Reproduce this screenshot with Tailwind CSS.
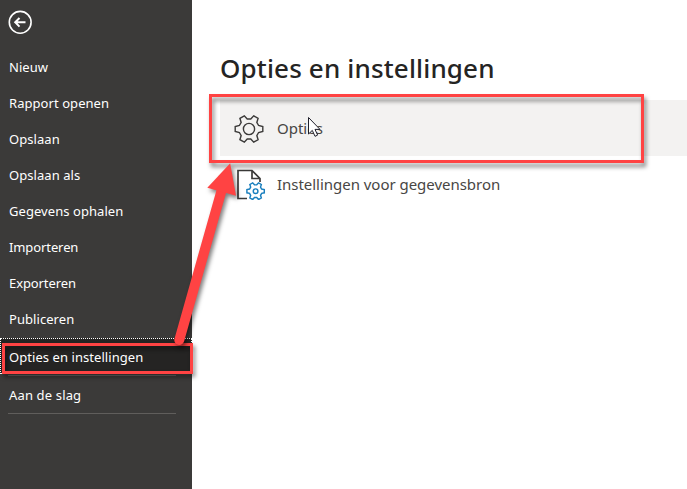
<!DOCTYPE html>
<html lang="nl">
<head>
<meta charset="utf-8">
<title>Opties en instellingen</title>
<script src="https://cdn.jsdelivr.net/npm/@tailwindcss/browser@4"></script>
</head>
<body class="relative flex h-[489px] w-[687px] overflow-hidden bg-white font-['Noto_Sans','Open_Sans',sans-serif]">
<svg class="absolute h-0 w-0"><defs>
<path id="gear" d="M13.8,-2.55 V2.55 L9.6,3.5 L7.83,6.56 L9.11,10.68 L4.69,13.23 L1.77,10.06 H-1.77 L-4.69,13.23 L-9.11,10.68 L-7.83,6.56 L-9.6,3.5 L-13.8,2.55 V-2.55 L-9.6,-3.5 L-7.83,-6.56 L-9.11,-10.68 L-4.69,-13.23 L-1.77,-10.06 H1.77 L4.69,-13.23 L9.11,-10.68 L7.83,-6.56 L9.6,-3.5Z"/>
</defs></svg>
<aside class="flex w-[192px] shrink-0 flex-col bg-[#3b3a39] text-[13px] text-white">
  <div class="h-[49px] pt-[10px] pl-2">
    <svg class="size-6" viewBox="0 0 24 24" fill="none" stroke="#fff"><circle cx="12.2" cy="12.3" r="10.9" stroke-width="1.6"/><path d="M17.5 12.3H7.2M11.5 8L7.2 12.3L11.5 16.6" stroke-width="2"/></svg>
  </div>
  <nav class="flex flex-col tracking-[0.06px]">
    <a class="flex h-9 items-center pt-0.5 pl-[9px]">Nieuw</a>
    <a class="flex h-9 items-center pt-0.5 pl-[9px]">Rapport openen</a>
    <a class="flex h-9 items-center pt-0.5 pl-[9px]">Opslaan</a>
    <a class="flex h-9 items-center pt-0.5 pl-[9px]">Opslaan als</a>
    <a class="flex h-9 items-center pt-0.5 pl-[9px]">Gegevens ophalen</a>
    <a class="flex h-9 items-center pt-0.5 pl-[9px] tracking-[-0.1px]">Importeren</a>
    <a class="flex h-9 items-center pt-0.5 pl-[9px] tracking-[-0.1px]">Exporteren</a>
    <a class="flex h-9 items-center pt-0.5 pl-[9px]">Publiceren</a>
    <div class="mt-px mb-px flex h-9 items-center border border-dotted border-white bg-[#252423] pt-[3px] pl-2">Opties en instellingen</div>
    <div class="ml-2 h-px w-[168px] bg-[#605e5c]"></div>
    <a class="flex h-[37px] items-center pt-0.5 pl-[9px] tracking-[0.15px]">Aan de slag</a>
    <div class="ml-2 h-px w-[168px] bg-[#605e5c]"></div>
  </nav>
</aside>
<main class="flex min-w-0 flex-1 flex-col">
  <h1 class="mt-[49px] ml-[28px] h-[51px] text-[26px] leading-[38px] font-medium tracking-[0.15px] whitespace-nowrap text-[#252423]">Opties en instellingen</h1>
  <div class="ml-7 flex h-14 items-center bg-[#f3f2f1] pl-[14px] text-[15px] text-[#484644]">
    <svg class="mt-0.5 mr-[13px] h-[30px] w-[30px]" viewBox="-15 -15 30 30" fill="none" stroke="#3b3a39" stroke-width="1.4"><use href="#gear"/><circle r="5.6"/></svg>
    <span>Opties</span>
  </div>
  <div class="ml-7 flex h-14 items-center pl-[14px] text-[15px] text-[#484644]">
    <svg class="mr-[11px] h-8 w-8" viewBox="234 168 32 32" fill="none"><path d="M247 198.5H238V170.5H252L260 178.5V182M252 170.5V178.5H260" stroke="#3b3a39" stroke-width="1.7"/><g transform="translate(255.6 191.2) scale(.63)" stroke="#1a7fbe" stroke-width="2.3"><use href="#gear" fill="#fff"/><circle r="3.7"/></g></svg>
    <span class="tracking-[-0.03px]">Instellingen voor gegevensbron</span>
  </div>
</main>
<svg class="absolute top-0 left-0" width="687" height="489" viewBox="0 0 687 489" fill="none">
  <path d="M308.5 117.5V134L312.3 130.4L315 136.3L317.6 135.1L315 129.4H320Z" fill="#fff" stroke="#1f1f2b"/>
  <g class="drop-shadow-[2px_4px_2px_rgba(0,0,0,0.5)]"><rect x="210.5" y="95.5" width="432" height="66" stroke="#ff4343" stroke-width="3"/></g>
  <g class="drop-shadow-[2px_3px_2px_rgba(0,0,0,0.5)]"><rect x="3.5" y="344.5" width="188" height="28" stroke="#ff4343" stroke-width="3"/></g>
  <g class="drop-shadow-[2px_3px_2px_rgba(0,0,0,0.5)]"><path d="M179.3 340L222 189" stroke="#ff4343" stroke-width="10" stroke-linecap="round"/><path d="M230.2 163.3L236 195.7L207.3 187.7Z" fill="#ff4343"/></g>
</svg>
</body>
</html>
